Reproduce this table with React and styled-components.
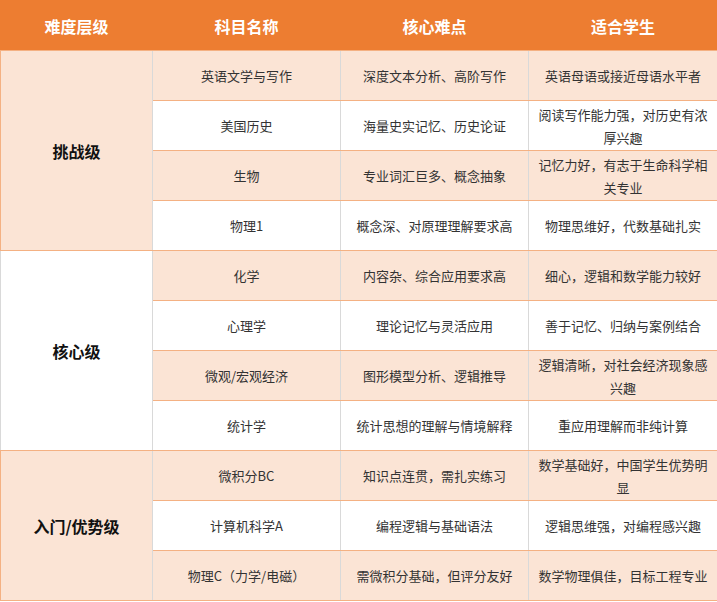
import React from "react";
import styled, { createGlobalStyle } from "styled-components";

const GlobalStyle = createGlobalStyle`
  html, body {
    margin: 0;
    padding: 0;
    background: #ffffff;
  }
  body {
    font-family: "Noto Sans CJK SC", "Noto Sans", sans-serif;
  }
`;

const ORANGE = "#ED7D31";
const PEACH = "#FBE4D5";
const LINE = "#F4B183";
const GRAY = "#D9D9D9";

const Table = styled.table`
  width: 717px;
  table-layout: fixed;
  border-collapse: collapse;
  font-family: "Noto Sans CJK SC", "Noto Sans", sans-serif;
`;

const HeadCell = styled.th`
  height: 49px;
  padding: 0;
  background: ${ORANGE};
  color: #ffffff;
  font-size: 16px;
  font-weight: 700;
  text-align: center;
  border-top: 1px solid ${ORANGE};
  border-bottom: 1px solid ${LINE};
  border-left: 1px solid ${(p) => (p.$first ? ORANGE : "#FCE3D2")};
  border-right: 1px solid ${ORANGE};
`;

const LevelCell = styled.td`
  padding: 0;
  background: ${(p) => (p.$shaded ? PEACH : "#ffffff")};
  color: #111111;
  font-size: 16px;
  font-weight: 700;
  text-align: center;
  vertical-align: middle;
  border-top: 1px solid ${LINE};
  border-bottom: 1px solid ${LINE};
  border-left: 1px solid ${(p) => (p.$shaded ? LINE : GRAY)};
  border-right: 1px solid ${GRAY};
`;

const Cell = styled.td`
  height: 49px;
  padding: 0 5px;
  background: ${(p) => (p.$shaded ? PEACH : "#ffffff")};
  color: #333333;
  font-size: 13px;
  line-height: 23px;
  text-align: center;
  vertical-align: middle;
  border-top: 1px solid ${LINE};
  border-bottom: 1px solid ${LINE};
  border-left: 1px solid ${GRAY};
  border-right: 1px solid ${(p) => (p.$last ? LINE : GRAY)};
`;

const groups = [
  {
    level: "挑战级",
    shaded: true,
    rows: [
      ["英语文学与写作", "深度文本分析、高阶写作", "英语母语或接近母语水平者"],
      ["美国历史", "海量史实记忆、历史论证", "阅读写作能力强，对历史有浓厚兴趣"],
      ["生物", "专业词汇巨多、概念抽象", "记忆力好，有志于生命科学相关专业"],
      ["物理1", "概念深、对原理理解要求高", "物理思维好，代数基础扎实"],
    ],
  },
  {
    level: "核心级",
    shaded: false,
    rows: [
      ["化学", "内容杂、综合应用要求高", "细心，逻辑和数学能力较好"],
      ["心理学", "理论记忆与灵活应用", "善于记忆、归纳与案例结合"],
      ["微观/宏观经济", "图形模型分析、逻辑推导", "逻辑清晰，对社会经济现象感兴趣"],
      ["统计学", "统计思想的理解与情境解释", "重应用理解而非纯计算"],
    ],
  },
  {
    level: "入门/优势级",
    shaded: true,
    rows: [
      ["微积分BC", "知识点连贯，需扎实练习", "数学基础好，中国学生优势明显"],
      ["计算机科学A", "编程逻辑与基础语法", "逻辑思维强，对编程感兴趣"],
      ["物理C（力学/电磁）", "需微积分基础，但评分友好", "数学物理俱佳，目标工程专业"],
    ],
  },
];

export default function App() {
  return (
    <>
      <GlobalStyle />
      <Table>
        <colgroup>
          <col style={{ width: 152 }} />
          <col style={{ width: 188 }} />
          <col style={{ width: 188 }} />
          <col style={{ width: 189 }} />
        </colgroup>
        <thead>
          <tr>
            <HeadCell $first>难度层级</HeadCell>
            <HeadCell>科目名称</HeadCell>
            <HeadCell>核心难点</HeadCell>
            <HeadCell>适合学生</HeadCell>
          </tr>
        </thead>
        <tbody>
          {groups.map((g) =>
            g.rows.map((r, i) => {
              const shaded = i % 2 === 0;
              return (
                <tr key={g.level + i}>
                  {i === 0 && (
                    <LevelCell rowSpan={g.rows.length} $shaded={g.shaded}>
                      {g.level}
                    </LevelCell>
                  )}
                  <Cell $shaded={shaded}>{r[0]}</Cell>
                  <Cell $shaded={shaded}>{r[1]}</Cell>
                  <Cell $shaded={shaded} $last>
                    {r[2]}
                  </Cell>
                </tr>
              );
            })
          )}
        </tbody>
      </Table>
    </>
  );
}
